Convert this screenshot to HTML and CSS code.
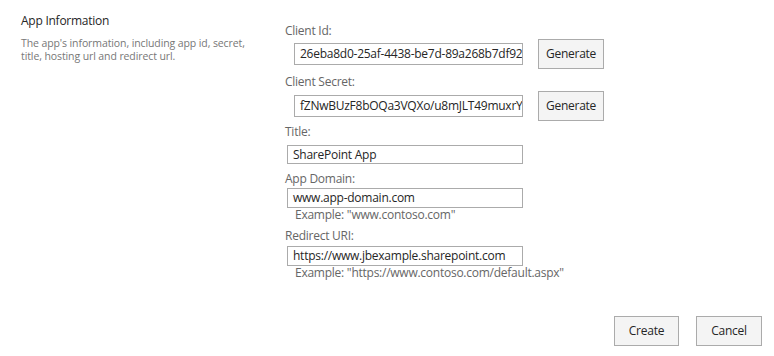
FILE: index.html
```html
<!DOCTYPE html>
<html>
<head>
<meta charset="utf-8">
<link rel="stylesheet" href="styles.css">
</head>
<body>
<div class="page">
  <div class="section">
    <div class="intro">
      <h3 class="intro-title">App Information</h3>
      <p class="intro-desc">The app's information, including app id, secret, title, hosting url and redirect url.</p>
    </div>
    <div class="fields">
      <div class="label l-client">Client Id:</div>
      <div class="gen-row">
        <div class="input input-wide">26eba8d0-25af-4438-be7d-89a268b7df92</div>
        <div class="btn btn-gen">Generate</div>
      </div>
      <div class="label l-secret">Client Secret:</div>
      <div class="gen-row">
        <div class="input input-wide">fZNwBUzF8bOQa3VQXo/u8mJLT49muxrY\</div>
        <div class="btn btn-gen">Generate</div>
      </div>
      <div class="label l-title">Title:</div>
      <div class="input input-plain i-title">SharePoint App</div>
      <div class="label l-domain">App Domain:</div>
      <div class="input input-plain i-domain">www.app-domain.com</div>
      <div class="example">Example: "www.contoso.com"</div>
      <div class="label l-redirect">Redirect URI:</div>
      <div class="input input-plain i-redirect">https://www.jbexample.sharepoint.com</div>
      <div class="example">Example: "https://www.contoso.com/default.aspx"</div>
    </div>
  </div>
  <div class="footer">
    <div class="btn btn-create">Create</div>
    <div class="btn btn-cancel">Cancel</div>
  </div>
</div>
</body>
</html>
```
FILE: styles.css
```css
html, body {
  margin: 0;
  padding: 0;
  background: #ffffff;
}
body {
  font-family: "Open Sans", "Noto Sans", sans-serif;
  color: #333333;
  letter-spacing: -0.25px;
}
.page {
  width: 774px;
  height: 356px;
  box-sizing: border-box;
}
.section {
  display: flex;
}
.intro {
  width: 264px;
  padding-left: 21px;
  padding-top: 12px;
  box-sizing: border-box;
}
.intro-title {
  margin: 0;
  font-size: 12px;
  font-weight: normal;
  line-height: 18px;
  color: #262626;
}
.intro-desc {
  width: 226px;
  margin: 7px 0 0 0;
  font-size: 10.5px;
  line-height: 13px;
  color: #777777;
  letter-spacing: -0.1px;
}
.fields {
  display: flex;
  flex-direction: column;
  align-items: flex-start;
  padding-left: 21px;
  padding-top: 23px;
}
.label {
  font-size: 12px;
  line-height: 16px;
  color: #666666;
}
.l-secret { margin-top: 5px; }
.l-title { margin-top: 3px; }
.l-domain { margin-top: 7px; }
.l-redirect { margin-top: 6px; }
.gen-row {
  display: flex;
  align-items: center;
  margin-left: 9px;
}
.l-secret + .gen-row { margin-top: 1px; }
.input {
  box-sizing: border-box;
  border: 1px solid #ababab;
  background: #ffffff;
  font-size: 12px;
  color: #262626;
  padding: 0 5px;
  white-space: nowrap;
  overflow: hidden;
}
.input-wide {
  width: 229px;
  height: 22px;
  line-height: 20px;
}
.input-plain {
  width: 236px;
  height: 20px;
  line-height: 18px;
  margin-left: 2px;
}
.i-title { margin-top: 5px; height: 19px; line-height: 17px; }
.i-domain { margin-top: 1px; }
.i-redirect { margin-top: 2px; }
.example {
  font-size: 12px;
  line-height: 14px;
  color: #666666;
  margin-left: 10px;
}
.btn {
  box-sizing: border-box;
  border: 1px solid #ababab;
  background: #f4f4f4;
  font-size: 12px;
  color: #262626;
  height: 30px;
  line-height: 28px;
  text-align: center;
}
.btn-gen {
  width: 66px;
  margin-left: 15px;
}
.footer {
  display: flex;
  justify-content: flex-end;
  gap: 17px;
  padding-right: 12px;
  margin-top: 36px;
}
.btn-create { width: 65px; }
.btn-cancel { width: 66px; }
```
